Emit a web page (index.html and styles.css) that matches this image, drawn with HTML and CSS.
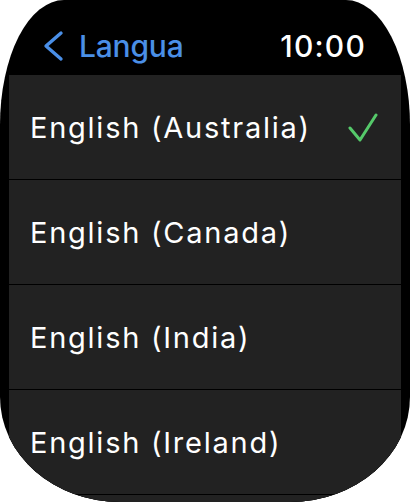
FILE: index.html
```html
<!DOCTYPE html>
<html>
<head>
<meta charset="utf-8">
<link rel="stylesheet" href="styles.css">
</head>
<body>
<div class="screen">
  <div class="header">
    <div class="back">
      <svg class="chev" width="26" height="32" viewBox="0 0 26 32"><path d="M21 3 L6 16 L21 29" fill="none" stroke="#4a8fe7" stroke-width="3.4" stroke-linecap="round" stroke-linejoin="round"/></svg>
      <span class="title">Langua</span>
    </div>
    <span class="time">10:00</span>
  </div>
  <div class="list">
    <div class="row"><span class="label">English (Australia)</span>
      <svg class="check" width="30" height="30" viewBox="0 0 30 30"><path d="M2 15 L12 27 L28 2" fill="none" stroke="#55c96a" stroke-width="3" stroke-linecap="round" stroke-linejoin="round"/></svg>
    </div>
    <div class="row"><span class="label">English (Canada)</span></div>
    <div class="row"><span class="label">English (India)</span></div>
    <div class="row"><span class="label">English (Ireland)</span></div>
    <div class="row"></div>
  </div>
</div>
</body>
</html>
```

FILE: styles.css
```css
html, body {
  margin: 0;
  padding: 0;
  background: #fff;
  overflow: hidden;
}
.screen {
  width: 410px;
  height: 502px;
  background: #000;
  border-radius: 64px 64px 120px 120px / 125px 125px 105px 105px;
  overflow: hidden;
  font-family: Inter, "Noto Sans", sans-serif;
}
.header {
  height: 75px;
  display: flex;
  align-items: center;
  justify-content: space-between;
  padding: 16px 44px 0 40px;
  box-sizing: border-box;
}
.back {
  display: flex;
  align-items: center;
  gap: 13px;
}
.chev {
  display: block;
}
.title {
  color: #4a8fe7;
  font-size: 30px;
  font-weight: 500;
  letter-spacing: -0.2px;
}
.time {
  color: #fff;
  font-size: 30px;
  font-weight: 500;
  letter-spacing: 1.2px;
}
.list {
  margin: 0 9px;
  display: flex;
  flex-direction: column;
  gap: 1px;
  background: #000;
  border-radius: 0 0 110px 110px / 0 0 100px 100px;
  overflow: hidden;
}
.row {
  height: 104px;
  flex: none;
  background: #222;
  display: flex;
  align-items: center;
  justify-content: space-between;
  padding: 0 23px 0 21px;
}
.label {
  color: #fff;
  font-size: 29px;
  font-weight: 400;
  letter-spacing: 1.75px;
}
.check {
  display: block;
  margin-top: 2px;
}
```
